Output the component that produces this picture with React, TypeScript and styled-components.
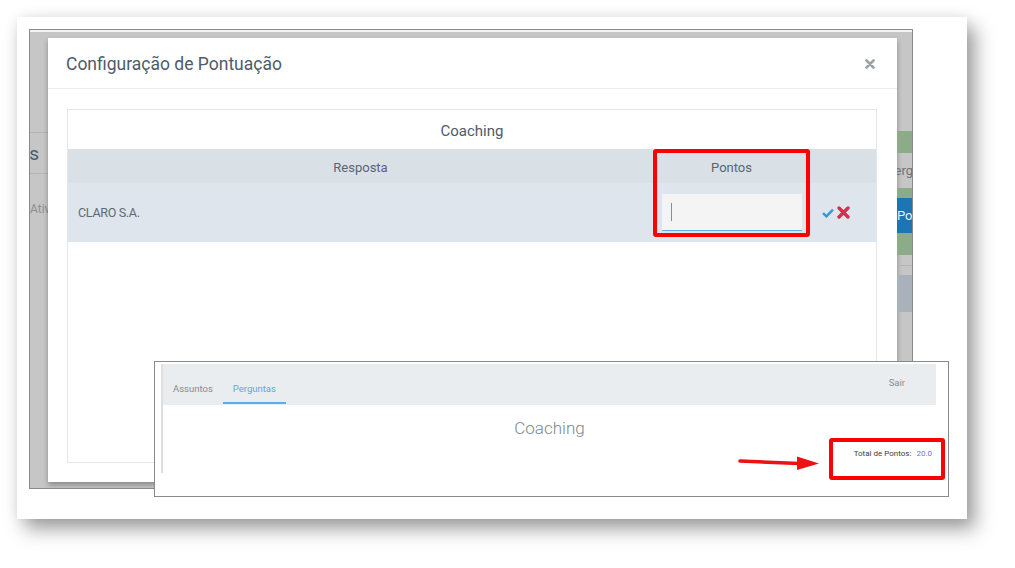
import styled, { createGlobalStyle } from 'styled-components';

const GlobalStyle = createGlobalStyle`
  html, body {
    margin: 0;
    padding: 0;
    background: #ffffff;
  }
  body {
    font-family: Roboto, 'Liberation Sans', Arial, sans-serif;
  }
`;

const Page = styled.div`
  width: 1015px;
  height: 568px;
  padding: 17px 0 0 17px;
  box-sizing: border-box;
  overflow: hidden;
`;

const Card = styled.div`
  position: relative;
  width: 950px;
  height: 502px;
  padding: 12px 0 0 12px;
  box-sizing: border-box;
  background: #ffffff;
  box-shadow: 8px 10px 18px rgba(0, 0, 0, 0.38), 0 0 12px rgba(0, 0, 0, 0.07);
`;

// first screenshot: modal over a greyed page
const Shot = styled.div`
  display: flex;
  width: 884px;
  height: 460px;
  box-sizing: border-box;
  border: 1px solid #8a8a8a;
  background: #c6c6c6;
  box-shadow: inset 0 2px 0 #f2f2f2;
  overflow: hidden;
`;

const EdgeStrip = styled.div<{ $w: number }>`
  width: ${(p) => p.$w}px;
  flex-shrink: 0;
  display: flex;
  flex-direction: column;
  overflow: hidden;
`;

const EdgeCell = styled.div<{ $h: number; $bg?: string; $line?: boolean; $end?: boolean; $padEnd?: number }>`
  height: ${(p) => p.$h}px;
  flex-shrink: 0;
  display: flex;
  align-items: center;
  justify-content: ${(p) => (p.$end ? 'flex-end' : 'flex-start')};
  padding-right: ${(p) => p.$padEnd || 0}px;
  background: ${(p) => p.$bg || 'transparent'};
  border-bottom: ${(p) => (p.$line ? '1px solid #b4b4b4' : 'none')};
  overflow: hidden;
  white-space: nowrap;
`;

const EdgeText = styled.span<{ $size: number; $color: string }>`
  font-size: ${(p) => p.$size}px;
  color: ${(p) => p.$color};
`;

const Modal = styled.div`
  width: 849px;
  flex-shrink: 0;
  margin: 8px 0 6px;
  display: flex;
  flex-direction: column;
  background: #ffffff;
  box-shadow: 0 3px 5px rgba(0, 0, 0, 0.3);
`;

const ModalHeader = styled.div`
  height: 51px;
  padding: 2px 22px 0 18px;
  box-sizing: border-box;
  display: flex;
  align-items: center;
  justify-content: space-between;
  border-bottom: 1px solid #eceeef;
`;

const ModalTitle = styled.h4`
  margin: 0;
  font-size: 17.5px;
  font-weight: 400;
  color: #4f5b66;
`;

const ModalBody = styled.div`
  flex: 1;
  padding: 20px 20px 19px 19px;
  display: flex;
`;

const Panel = styled.div`
  position: relative;
  flex: 1;
  border: 1px solid #e3e7ea;
`;

const PanelTitle = styled.div`
  height: 39px;
  display: flex;
  align-items: center;
  justify-content: center;
  padding-top: 2px;
  box-sizing: border-box;
  font-size: 15px;
  color: #4d5b67;
`;

const Table = styled.div`
  display: grid;
  grid-template-columns: 585px 157px 1fr;
`;

const HeadCell = styled.div`
  height: 34px;
  display: flex;
  align-items: center;
  justify-content: center;
  padding-top: 2px;
  box-sizing: border-box;
  background: #d9e1e7;
  font-size: 13px;
  color: #586571;
`;

const BodyCell = styled.div<{ $pad?: number }>`
  height: 59px;
  display: flex;
  align-items: center;
  padding-left: ${(p) => p.$pad || 0}px;
  background: #dee5ec;
  font-size: 12.5px;
  color: #5c6b78;
  letter-spacing: -0.3px;
`;

const ScoreInput = styled.div`
  width: 140px;
  height: 37px;
  box-sizing: border-box;
  padding-left: 9px;
  display: flex;
  align-items: center;
  background: #f4f4f4;
  border-bottom: 1px solid #5aaee2;
`;

const Caret = styled.span`
  width: 1px;
  height: 18px;
  background: #4a9fd8;
`;

const Actions = styled.div`
  display: flex;
  align-items: center;
  gap: 3px;
`;

const Highlight = styled.div<{ $border: number; $radius: number }>`
  position: absolute;
  box-sizing: border-box;
  border: ${(p) => p.$border}px solid #ff0000;
  border-radius: ${(p) => p.$radius}px;
  pointer-events: none;
`;

// second screenshot laid over the first
const Inset = styled.div`
  position: absolute;
  left: 137px;
  top: 344px;
  width: 795px;
  height: 136px;
  box-sizing: border-box;
  padding: 2px 12px 0 6px;
  border: 1px solid #8a8a8a;
  background: #ffffff;
`;

const InsetFrame = styled.div`
  height: 109px;
  display: flex;
  flex-direction: column;
  border-left: 2px solid #dedede;
`;

const NavBar = styled.div`
  height: 41px;
  flex-shrink: 0;
  display: flex;
  background: #eaedf0;
`;

const Tab = styled.div<{ $active?: boolean }>`
  display: flex;
  align-items: center;
  padding: 10px 10px 0;
  margin: 0 0 1px 0;
  font-size: 9.5px;
  color: ${(p) => (p.$active ? '#5fa4ea' : '#8a8a8a')};
  border-bottom: 2px solid ${(p) => (p.$active ? '#5aabef' : 'transparent')};
`;

const Exit = styled.div`
  margin-left: auto;
  padding: 0 31px 4px 0;
  display: flex;
  align-items: center;
  font-size: 9.5px;
  color: #8a8a8a;
`;

const InsetTitle = styled.div`
  padding-top: 13px;
  text-align: center;
  font-size: 17px;
  font-weight: 300;
  line-height: 20px;
  color: #7c8892;
`;

const TotalRow = styled.div`
  display: flex;
  justify-content: flex-end;
  align-items: center;
  gap: 5px;
  margin-top: 11px;
  padding-right: 4px;
  font-size: 8px;
  color: #3c3c3c;
`;

const TotalValue = styled.span`
  color: #6f6ff5;
`;

const Arrow = styled.svg`
  position: absolute;
  left: 721px;
  top: 435px;
`;

export default function App() {
  return (
    <Page>
      <GlobalStyle />
      <Card>
        <Shot>
          <EdgeStrip $w={18}>
            <EdgeCell $h={102} $line />
            <EdgeCell $h={40} $line $end $padEnd={9}>
              <EdgeText $size={19} $color="#4d5b67">Perguntas</EdgeText>
            </EdgeCell>
            <EdgeCell $h={70}>
              <EdgeText $size={12} $color="#8e8e8e">Ativo</EdgeText>
            </EdgeCell>
          </EdgeStrip>

          <Modal>
            <ModalHeader>
              <ModalTitle>Configuração de Pontuação</ModalTitle>
              <svg width="10" height="10" viewBox="0 0 10 10">
                <path d="M1.5 1.5 L8.5 8.5 M8.5 1.5 L1.5 8.5" stroke="#9ba1a6" strokeWidth="2.6" strokeLinecap="round" />
              </svg>
            </ModalHeader>
            <ModalBody>
              <Panel>
                <PanelTitle>Coaching</PanelTitle>
                <Table>
                  <HeadCell>Resposta</HeadCell>
                  <HeadCell>Pontos</HeadCell>
                  <HeadCell />
                  <BodyCell $pad={10}>CLARO S.A.</BodyCell>
                  <BodyCell $pad={9}>
                    <ScoreInput>
                      <Caret />
                    </ScoreInput>
                  </BodyCell>
                  <BodyCell $pad={12}>
                    <Actions>
                      <svg width="12" height="10" viewBox="0 0 12 10">
                        <path d="M1 5.2 L4.4 8.4 L11 1.6" fill="none" stroke="#3897d8" strokeWidth="2.4" />
                      </svg>
                      <svg width="13" height="13" viewBox="0 0 13 13">
                        <path d="M2 2 L11 11 M11 2 L2 11" stroke="#d6304f" strokeWidth="3.4" strokeLinecap="round" />
                      </svg>
                    </Actions>
                  </BodyCell>
                </Table>
                <Highlight $border={4} $radius={3} style={{ left: 585, top: 39, width: 157, height: 88 }} />
              </Panel>
            </ModalBody>
          </Modal>

          <EdgeStrip $w={16}>
            <EdgeCell $h={101} />
            <EdgeCell $h={22} $bg="#8bab89" />
            <EdgeCell $h={35} $end>
              <EdgeText $size={13} $color="#6b747c">Perg</EdgeText>
            </EdgeCell>
            <EdgeCell $h={10} $bg="#8bab89" />
            <EdgeCell $h={35} $bg="#1d76b3">
              <EdgeText $size={13} $color="#e8f1f8">Pontuar</EdgeText>
            </EdgeCell>
            <EdgeCell $h={22} $bg="#8bab89" />
            <EdgeCell $h={10} $line />
            <EdgeCell $h={9} />
            <EdgeCell $h={37} $bg="#a9b2ba" />
          </EdgeStrip>
        </Shot>

        <Inset>
          <InsetFrame>
            <NavBar>
              <Tab>Assuntos</Tab>
              <Tab $active>Perguntas</Tab>
              <Exit>Sair</Exit>
            </NavBar>
            <InsetTitle>Coaching</InsetTitle>
            <TotalRow>
              Total de Pontos:
              <TotalValue>20.0</TotalValue>
            </TotalRow>
          </InsetFrame>
        </Inset>

        <Highlight $border={4} $radius={3} style={{ left: 812, top: 421, width: 116, height: 42 }} />

        <Arrow width="84" height="20" viewBox="0 0 84 20">
          <path d="M2 9 L61 11.5" stroke="#ee1111" strokeWidth="3.6" strokeLinecap="round" />
          <polygon points="59,4.5 81,11.5 59,18" fill="#ee1111" />
        </Arrow>
      </Card>
    </Page>
  );
}
